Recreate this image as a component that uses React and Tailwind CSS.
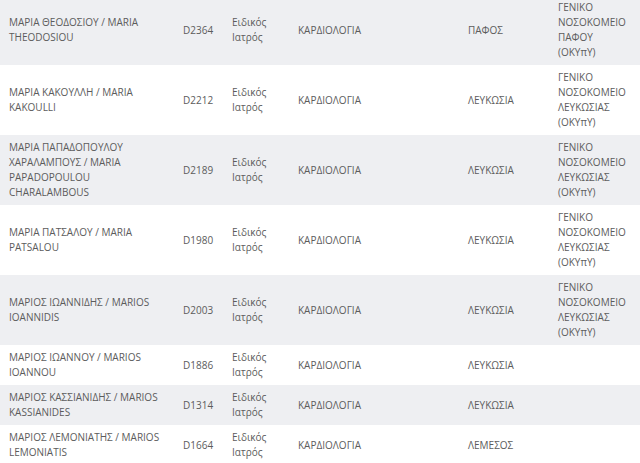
export default function App() {
  const rows = [
    { name: ["ΜΑΡΙΑ ΘΕΟΔΟΣΙΟΥ / MARIA THEODOSIOU"], id: "D2364", city: "ΠΑΦΟΣ", hosp: "ΓΕΝΙΚΟ ΝΟΣΟΚΟΜΕΙΟ ΠΑΦΟΥ (ΟΚΥπΥ)" },
    { name: ["ΜΑΡΙΑ ΚΑΚΟΥΛΛΗ / MARIA KAKOULLI"], id: "D2212", city: "ΛΕΥΚΩΣΙΑ", hosp: "ΓΕΝΙΚΟ ΝΟΣΟΚΟΜΕΙΟ ΛΕΥΚΩΣΙΑΣ (ΟΚΥπΥ)" },
    { name: ["ΜΑΡΙΑ ΠΑΠΑΔΟΠΟΥΛΟΥ ΧΑΡΑΛΑΜΠΟΥΣ / MARIA PAPADOPOULOU CHARALAMBOUS"], id: "D2189", city: "ΛΕΥΚΩΣΙΑ", hosp: "ΓΕΝΙΚΟ ΝΟΣΟΚΟΜΕΙΟ ΛΕΥΚΩΣΙΑΣ (ΟΚΥπΥ)" },
    { name: ["ΜΑΡΙΑ ΠΑΤΣΑΛΟΥ / MARIA PATSALOU"], id: "D1980", city: "ΛΕΥΚΩΣΙΑ", hosp: "ΓΕΝΙΚΟ ΝΟΣΟΚΟΜΕΙΟ ΛΕΥΚΩΣΙΑΣ (ΟΚΥπΥ)" },
    { name: ["ΜΑΡΙΟΣ ΙΩΑΝΝΙΔΗΣ / MARIOS IOANNIDIS"], id: "D2003", city: "ΛΕΥΚΩΣΙΑ", hosp: "ΓΕΝΙΚΟ ΝΟΣΟΚΟΜΕΙΟ ΛΕΥΚΩΣΙΑΣ (ΟΚΥπΥ)" },
    { name: ["ΜΑΡΙΟΣ ΙΩΑΝΝΟΥ / MARIOS IOANNOU"], id: "D1886", city: "ΛΕΥΚΩΣΙΑ", hosp: "" },
    { name: ["ΜΑΡΙΟΣ ΚΑΣΣΙΑΝΙΔΗΣ / MARIOS KASSIANIDES"], id: "D1314", city: "ΛΕΥΚΩΣΙΑ", hosp: "" },
    { name: ["ΜΑΡΙΟΣ ΛΕΜΟΝΙΑΤΗΣ / MARIOS LEMONIATIS"], id: "D1664", city: "ΛΕΜΕΣΟΣ", hosp: "" },
  ];
  return (
    <div className="w-[640px] h-[463px] overflow-hidden bg-white">
      <table
        className="table-fixed w-[640px] border-collapse mt-[-5px] text-[10px] leading-[15px] text-[#5c5c5c]"
        style={{ fontFamily: '"Open Sans", "Noto Sans", sans-serif' }}
      >
        <colgroup>
          <col className="w-[175px]" />
          <col className="w-[49px]" />
          <col className="w-[66px]" />
          <col className="w-[170px]" />
          <col className="w-[90px]" />
          <col className="w-[90px]" />
        </colgroup>
        <tbody>
          {rows.map((r, i) => (
            <tr key={i} className={i % 2 === 0 ? "bg-[#eeeff2]" : "bg-white"}>
              <td className="align-middle py-[5px] pl-[9px] pr-[8px]">{r.name}</td>
              <td className="align-middle py-[5px] pl-[8px]">{r.id}</td>
              <td className="align-middle py-[5px] pl-[8px] pr-[8px]">Ειδικός Ιατρός</td>
              <td className="align-middle py-[5px] pl-[8px]">ΚΑΡΔΙΟΛΟΓΙΑ</td>
              <td className="align-middle py-[5px] pl-[8px]">{r.city}</td>
              <td className="align-middle py-[5px] pl-[8px] pr-[8px]">{r.hosp}</td>
            </tr>
          ))}
        </tbody>
      </table>
    </div>
  );
}
